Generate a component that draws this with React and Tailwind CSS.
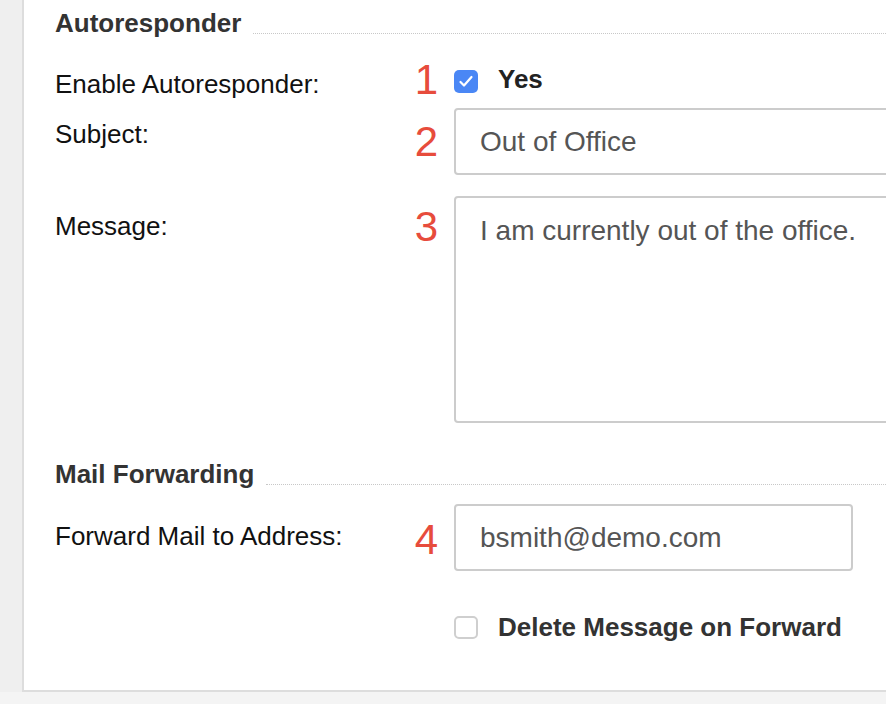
import React from "react";

const font = { fontFamily: '"Liberation Sans", Arial, Helvetica, sans-serif' };

function Num({ n, className = "" }) {
  return (
    <div className={"w-[40px] shrink-0 text-right text-[42px] leading-none text-[#e74c3c] " + className}>
      {n}
    </div>
  );
}

function Label({ children, className = "" }) {
  return (
    <div className={"w-[343px] shrink-0 text-[26px] leading-none text-[#111] " + className}>
      {children}
    </div>
  );
}

function Header({ children, className = "" }) {
  return (
    <div className={"flex items-end " + className}>
      <div className="text-[26px] font-bold leading-none text-[#333]">{children}</div>
      <div className="mb-[2px] ml-[12px] h-0 flex-1 border-b border-dotted border-[#c8c8c8]" />
    </div>
  );
}

export default function App() {
  return (
    <div className="flex h-[704px] w-[886px] flex-col overflow-hidden bg-[#f4f4f4]" style={font}>
      <div className="flex h-[692px] shrink-0">
        <div className="w-[22px] shrink-0 bg-[#efefef]" />
        <div className="flex-1 overflow-hidden border-b-2 border-l-2 border-[#dddddd] bg-white pl-[31px]">
          <Header className="mt-[10px]">Autoresponder</Header>

          {/* Row 1 */}
          <div className="mt-[23px] flex h-[49px] items-start">
            <Label className="mt-[12px]">Enable Autoresponder:</Label>
            <Num n="1" />
            <div className="ml-[16px] mt-[11px] flex h-[23px] w-[24px] shrink-0 items-center justify-center rounded-[5px] bg-[#4a87f5]">
              <svg width="24" height="23" viewBox="0 0 24 23">
                <path d="M6.5 12 L10 15.5 L17.5 7" fill="none" stroke="white" strokeWidth="2.2" strokeLinecap="round" strokeLinejoin="round" />
              </svg>
            </div>
            <span className="ml-[20px] mt-[7px] text-[26px] font-bold leading-none text-[#222]">Yes</span>
          </div>

          {/* Row 2 */}
          <div className="flex items-start">
            <Label className="mt-[13px]">Subject:</Label>
            <Num n="2" className="mt-[13px]" />
            <div className="ml-[16px] flex h-[67px] w-[500px] shrink-0 items-center rounded-[4px] border-2 border-[#cccccc] pl-[24px] text-[28px] text-[#555]">
              Out of Office
            </div>
          </div>

          {/* Row 3 */}
          <div className="mt-[21px] flex items-start">
            <Label className="mt-[17px]">Message:</Label>
            <Num n="3" className="mt-[10px]" />
            <div className="ml-[16px] h-[227px] w-[500px] shrink-0 rounded-[4px] border-2 border-[#cccccc] pl-[24px] pt-[19px] text-[28px] leading-none text-[#555]">
              I am currently out of the office.
            </div>
          </div>

          <Header className="mt-[38px]">Mail Forwarding</Header>

          {/* Row 4 */}
          <div className="mt-[17px] flex items-start">
            <Label className="mt-[19px]">Forward Mail to Address:</Label>
            <Num n="4" className="mt-[15px]" />
            <div className="ml-[16px] flex h-[67px] w-[399px] shrink-0 items-center rounded-[4px] border-2 border-[#cccccc] pl-[24px] text-[28px] text-[#555]">
              bsmith@demo.com
            </div>
          </div>

          {/* Row 5 */}
          <div className="mt-[43px] flex items-center pl-[399px]">
            <div className="h-[23px] w-[24px] shrink-0 rounded-[5px] border-2 border-[#cfcfcf] bg-white" />
            <span className="ml-[20px] text-[26px] font-bold leading-none text-[#333]">Delete Message on Forward</span>
          </div>
        </div>
      </div>
      <div className="flex-1 bg-[#f4f4f4]" />
    </div>
  );
}
